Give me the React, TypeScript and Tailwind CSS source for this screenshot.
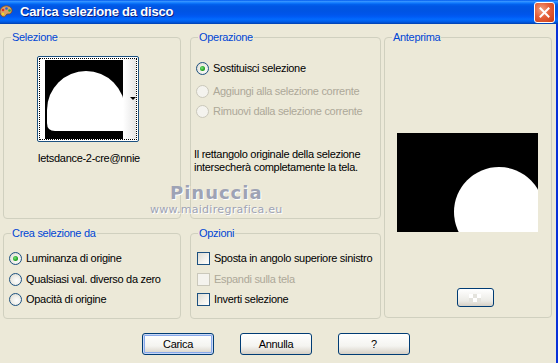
import React from 'react'

const Radio = ({ checked, disabled }: { checked?: boolean; disabled?: boolean }) => (
  <span
    className={`relative inline-flex h-[13px] w-[13px] shrink-0 items-center justify-center rounded-full border ${
      disabled
        ? 'border-[#CAC8BB] bg-[#F4F3EE]'
        : 'border-[#1C5180] bg-[radial-gradient(circle_at_60%_60%,#FFFFFF_0%,#F0EFEA_45%,#D6D3C6_100%)]'
    }`}
  >
    {checked && (
      <span className="h-[5px] w-[5px] rounded-full bg-[radial-gradient(circle_at_40%_40%,#7BE37B_0%,#21A121_60%,#0E7A0E_100%)]" />
    )}
  </span>
)

const Check = ({ disabled }: { disabled?: boolean }) => (
  <span
    className={`inline-block h-[13px] w-[13px] shrink-0 border ${
      disabled
        ? 'border-[#CAC8BB] bg-[#F4F3EE]'
        : 'border-[#1C5180] bg-[linear-gradient(135deg,#DCDBD4_0%,#F4F3EE_60%,#FFFFFF_100%)]'
    }`}
  />
)

const Group = ({
  label,
  className,
  children,
}: {
  label: string
  className: string
  children?: React.ReactNode
}) => (
  <div className={`relative rounded-[4px] border border-[#D0D0BF] ${className}`}>
    <span className="absolute -top-[7px] left-[7px] bg-[#ECE9D8] px-[1px] leading-[13px] text-[#0046D5]">
      {label}
    </span>
    {children}
  </div>
)

const Row = ({ children, className = '' }: { children: React.ReactNode; className?: string }) => (
  <div className={`flex h-[13px] items-center gap-[4px] leading-[13px] ${className}`}>{children}</div>
)

const Button = ({ label, primary }: { label: string; primary?: boolean }) => (
  <button
    className={`h-[22px] w-[72px] rounded-[3px] border border-[#003C74] bg-[linear-gradient(to_bottom,#FFFFFF_0%,#F4F4F0_60%,#D6D0C5_100%)] text-[11px] text-black ${
      primary ? 'shadow-[inset_0_0_0_1px_#C9D8F5,inset_0_0_0_2px_#88A9EB]' : ''
    }`}
  >
    {label}
  </button>
)

export default function App() {
  return (
    <div className="relative h-[363px] w-[558px] overflow-hidden bg-[#ECE9D8] font-['Liberation_Sans',Arial,sans-serif] text-[11px] tracking-[-0.3px] text-black">
      {/* barra del titolo */}
      <div className="flex h-[24px] items-center bg-[linear-gradient(to_bottom,#0058EE_0%,#3593FF_6%,#127DFF_12%,#0262EE_18%,#0057E5_26%,#0054E3_45%,#0055EB_60%,#005BF5_70%,#026AFE_80%,#0062EF_88%,#0052D6_94%,#0040AB_100%)]">
        <svg width="16" height="16" viewBox="0 0 16 16" className="-ml-[2px] mr-[6px]">
          <path d="M2 9 C1 4 6 1 10 2 C14 3 15 7 13 9 C11 11 9 9 8 11 C7 14 3 13 2 9 Z" fill="#D9A066" stroke="#7A4A1E" strokeWidth="0.8" />
          <circle cx="5" cy="6" r="1.3" fill="#E03020" />
          <circle cx="8.5" cy="4.5" r="1.3" fill="#2060E0" />
          <circle cx="11.5" cy="6.5" r="1.3" fill="#30B030" />
          <circle cx="5" cy="10" r="1.2" fill="#F0E020" />
        </svg>
        <span className="font-['Liberation_Sans',Arial,sans-serif] text-[13px] font-bold tracking-[-0.2px] text-white [text-shadow:1px_1px_0_#0A1E80]">
          Carica selezione da disco
        </span>
        <div className="ml-auto mr-[3px] flex h-[21px] w-[21px] items-center justify-center rounded-[3px] border border-white bg-[radial-gradient(circle_at_35%_35%,#F0A080_0%,#E5603A_45%,#C83A12_100%)]">
          <svg width="11" height="11" viewBox="0 0 11 11">
            <path d="M1.5 1.5 L9.5 9.5 M9.5 1.5 L1.5 9.5" stroke="white" strokeWidth="2" strokeLinecap="square" />
          </svg>
        </div>
      </div>

      {/* corpo */}
      <div className="h-[339px] border-r-2 border-[#0831D9] pl-[3px] pt-[13px]">
        <div className="flex">
          <div className="flex w-[178px] flex-col gap-[14px]">
            <Group label="Selezione" className="h-[182px] pl-[33px] pt-[18px]">
              <div className="h-[86px] w-[102px] rounded-[2px] border border-[#1C5180] bg-white p-[1px]">
                <div className="flex h-full w-full border border-dotted border-black">
                  <svg width="78" height="79" viewBox="0 0 78 79" className="ml-[5px] mt-[1px]">
                    <rect width="78" height="79" fill="black" />
                    <path d="M2 50 A39 39 0 0 1 80 50 L80 71 L10 71 Q2 71 2 63 Z" fill="white" />
                  </svg>
                  <div className="relative flex-1 bg-[linear-gradient(to_right,#FFFFFF,#E6E6E6)]">
                    <span className="absolute left-[7px] top-[38px] h-0 w-0 border-x-[3px] border-t-[3px] border-x-transparent border-t-black" />
                  </div>
                </div>
              </div>
              <div className="mt-[10px] w-[104px] text-center leading-[13px]">letsdance-2-cre@nnie</div>
            </Group>
            <Group label="Crea selezione da" className="h-[86px] pl-[5px] pt-[18px]">
              <Row>
                <Radio checked />
                <span>Luminanza di origine</span>
              </Row>
              <Row className="mt-[8px]">
                <Radio />
                <span>Qualsiasi val. diverso da zero</span>
              </Row>
              <Row className="mt-[7px]">
                <Radio />
                <span>Opacità di origine</span>
              </Row>
            </Group>
          </div>

          <div className="ml-[9px] flex w-[191px] flex-col gap-[14px]">
            <Group label="Operazione" className="h-[182px] pl-[5px] pt-[24px]">
              <Row>
                <Radio checked />
                <span>Sostituisci selezione</span>
              </Row>
              <Row className="mt-[10px] text-[#ACA899]">
                <Radio disabled />
                <span>Aggiungi alla selezione corrente</span>
              </Row>
              <Row className="mt-[7px] text-[#ACA899]">
                <Radio disabled />
                <span>Rimuovi dalla selezione corrente</span>
              </Row>
              <p className="-ml-[2px] mt-[30px] leading-[13px]">
                Il rettangolo originale della selezione
                <br />
                intersecherà completamente la tela.
              </p>
            </Group>
            <Group label="Opzioni" className="h-[86px] pl-[6px] pt-[18px]">
              <Row>
                <Check />
                <span>Sposta in angolo superiore sinistro</span>
              </Row>
              <Row className="mt-[8px] text-[#ACA899]">
                <Check disabled />
                <span>Espandi sulla tela</span>
              </Row>
              <Row className="mt-[7px]">
                <Check />
                <span>Inverti selezione</span>
              </Row>
            </Group>
          </div>

          <Group label="Anteprima" className="ml-[3px] flex h-[281px] w-[168px] flex-col pl-[12px] pt-[95px]">
            <svg width="141" height="99" viewBox="0 0 141 99">
              <rect width="141" height="99" fill="black" />
              <circle cx="102" cy="79" r="45" fill="white" />
            </svg>
            <div className="ml-[60px] mt-[56px] flex h-[19px] w-[37px] items-center justify-center rounded-[3px] border border-[#003C74] bg-[linear-gradient(to_bottom,#FFFFFF,#ECEBE6_70%,#D6D0C5)]">
              <svg width="14" height="8" viewBox="0 0 14 8">
                <rect x="0" y="0" width="4" height="4" fill="#FFFFFF" />
                <rect x="8" y="0" width="4" height="4" fill="#FFFFFF" />
                <rect x="4" y="4" width="4" height="4" fill="#FFFFFF" />
                <rect x="4" y="0" width="4" height="4" fill="#E4E3DD" />
                <rect x="0" y="4" width="4" height="4" fill="#E4E3DD" />
                <rect x="8" y="4" width="4" height="4" fill="#E4E3DD" />
              </svg>
            </div>
          </Group>
        </div>

        <div className="ml-[139px] mt-[14px] flex gap-[26px]">
          <Button label="Carica" primary />
          <Button label="Annulla" />
          <Button label="?" />
        </div>
      </div>

      {/* filigrana */}
      <div className="pointer-events-none absolute left-[150px] top-[183px] flex flex-col items-center font-['DejaVu_Sans',sans-serif] text-[#9EA3B5] [text-shadow:1px_1px_0_#FFFFFF]">
        <span className="text-[18px] font-bold leading-[20px] tracking-[1px]">Pinuccia</span>
        <span className="text-[11px] leading-[13px] tracking-[0.3px]">www.maidiregrafica.eu</span>
      </div>
    </div>
  )
}
